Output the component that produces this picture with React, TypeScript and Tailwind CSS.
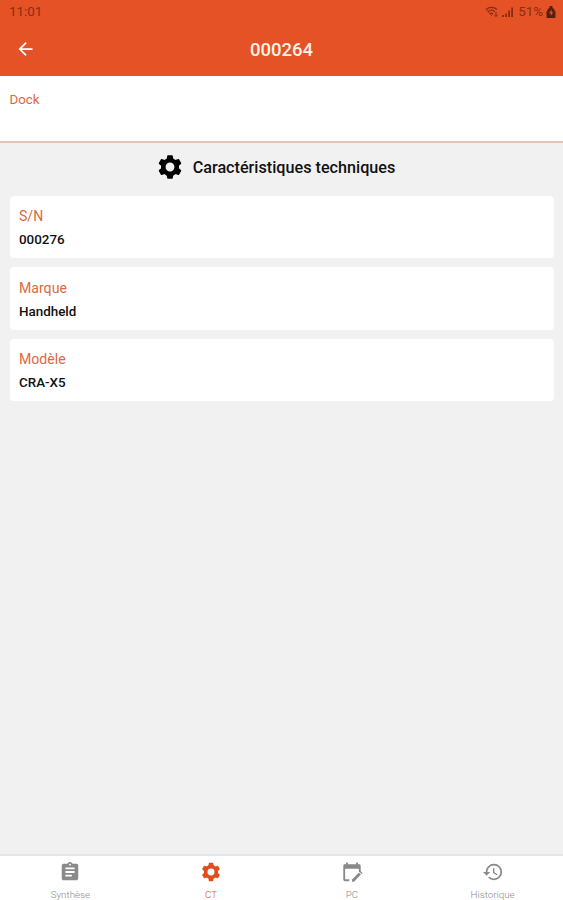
import type { ComponentType } from 'react';
import { MdArrowBack, MdAssignment, MdHistory } from 'react-icons/md';

interface IconProps {
  className?: string;
}

interface Spec {
  label: string;
  value: string;
}

interface Tab {
  label: string;
  icon: ComponentType<IconProps>;
  active?: boolean;
}

const SPECS: Spec[] = [
  { label: 'S/N', value: '000276' },
  { label: 'Marque', value: 'Handheld' },
  { label: 'Modèle', value: 'CRA-X5' },
];

const TABS: Tab[] = [
  { label: 'Synthèse', icon: MdAssignment },
  { label: 'CT', icon: GearIcon, active: true },
  { label: 'PC', icon: CalendarEditIcon },
  { label: 'Historique', icon: MdHistory },
];

export default function App() {
  return (
    <div className="flex h-screen w-full flex-col overflow-hidden bg-[#f1f1f1] font-[Roboto,sans-serif]">
      <header className="h-[76px] shrink-0 bg-[#e55225]">
        <StatusBar />
        <div className="grid h-[51px] grid-cols-[1fr_auto_1fr] items-center">
          <MdArrowBack className="ml-[14.5px] size-[21px] -translate-y-[1.5px] text-white" />
          <h1 className="text-[18.5px] font-medium leading-[51px] text-[#fff3e8]">000264</h1>
        </div>
      </header>

      {/* Equipment type */}
      <section className="h-[67px] shrink-0 border-b-2 border-[#e3c3b7] bg-white px-[9.5px] pt-4">
        <p className="text-[13.3px] leading-4 text-[#de6841]">Dock</p>
      </section>

      <main className="flex-1">
        <div className="flex h-[53px] items-center justify-center pb-1 pr-[12px]">
          <GearIcon className="mb-0.5 size-[28px] text-black" />
          <h2 className="ml-[9px] pt-0.5 text-[16.2px] font-medium text-[#111]">
            Caractéristiques techniques
          </h2>
        </div>
        <div className="flex flex-col gap-[9px] px-[9.5px]">
          {SPECS.map((spec) => (
            <SpecCard key={spec.label} spec={spec} />
          ))}
        </div>
      </main>

      <nav className="grid h-[46px] shrink-0 grid-cols-4 border-t-2 border-[#e6e6e6] bg-white">
        {TABS.map((tab) => (
          <TabItem key={tab.label} tab={tab} />
        ))}
      </nav>
    </div>
  );
}

function StatusBar() {
  return (
    <div className="flex h-[25px] items-center justify-between pl-[9px] pr-[7px] text-[#872e12]">
      <span className="text-[13.4px]">11:01</span>
      <div className="flex items-center">
        {/* Wi-Fi */}
        <svg viewBox="0 0 14 12" className="mr-[3px] h-3 w-[14px]" fill="none" stroke="currentColor">
          <path d="M1 3.500C4.200.7 8.800.7 12 3.500M3 5.700c2.100-1.800 4.900-1.800 7 0M5 7.700c.9-.7 2.100-.7 3 0" strokeWidth="1.300" />
          <path d="M1 3.500l5.500 6L8 8" strokeWidth=".8" />
          <path d="M11 6v4.500M9.400 8.900L11 10.500l1.600-1.600" strokeWidth="1" />
        </svg>
        {/* Signal strength */}
        <svg viewBox="0 0 12 12" className="mr-1 h-3 w-3" fill="currentColor">
          <path d="M0 9h2v2H0zM3.200 7.500h1.800V11H3.200zM6.200 4.500h1.800V11H6.200zM9.200 1.500h1.800V11H9.200z" />
        </svg>
        <span className="text-[13.4px]">51%</span>
        {/* Battery */}
        <svg viewBox="0 0 10 12" className="ml-[3px] h-3 w-[10px] text-[#55200f]">
          <path d="M3.500 0h3v2c1.500.4 2 1.200 2 2.500l1 1V11c0 .6-.4 1-1 1h-7c-.6 0-1-.4-1-1V5.500l1-1c0-1.300.5-2.100 2-2.500z" fill="currentColor" />
          <path d="M5.600 3.500L3 7.200h1.800V10l2.400-3.800H5.600z" fill="#e55225" />
        </svg>
      </div>
    </div>
  );
}

function SpecCard({ spec }: { spec: Spec }) {
  return (
    <div className="h-[62.4px] rounded-[4px] bg-white px-[9.5px] pt-[10.2px]">
      <p className="text-[14.1px] leading-5 text-[#de6841]">{spec.label}</p>
      <p className="mt-1 text-[13.4px] font-medium leading-5 text-[#111]">{spec.value}</p>
    </div>
  );
}

function TabItem({ tab }: { tab: Tab }) {
  const Icon = tab.icon;

  return (
    <div
      className={`flex flex-col items-center pt-[5px] ${tab.active ? 'text-[#e04e1e]' : 'text-[#8a8a8a]'}`}
    >
      <Icon className="size-[22px]" />
      <span className="mt-[6px] text-[9.8px] font-light leading-3">{tab.label}</span>
    </div>
  );
}

// ---------------------------------------------------------------------------
// Icons
// ---------------------------------------------------------------------------

const TOOTH_ANGLES = [0, 60, 120, 180, 240, 300];

function GearIcon({ className }: IconProps) {
  return (
    <svg viewBox="0 0 24 24" className={className} fill="currentColor">
      <circle cx="12" cy="12" r="5.800" fill="none" stroke="currentColor" strokeWidth="4" />
      {TOOTH_ANGLES.map((angle) => (
        <path
          key={angle}
          d="M10.200 2h3.600q.5 0 .6.5l.6 3.700h-6l.6-3.700q.1-.5.6-.5z"
          transform={`rotate(${angle} 12 12)`}
        />
      ))}
    </svg>
  );
}

function CalendarEditIcon({ className }: IconProps) {
  return (
    <svg viewBox="0 0 24 24" className={className} fill="currentColor">
      <path d="M5.500 1.500h2v2h9v-2h2v2h1.300c1 0 1.700.7 1.700 1.700V12h-2V8.500h-15V20H9v2H4.200c-1 0-1.700-.7-1.700-1.700V5.200c0-1 .7-1.700 1.700-1.700h1.300z" />
      <path d="M12 22.500v-2.300l7.600-7.600 2.200 2.200-7.600 7.700zM20.300 11.900l.9-.9 2.200 2.200-.9.900z" />
    </svg>
  );
}
